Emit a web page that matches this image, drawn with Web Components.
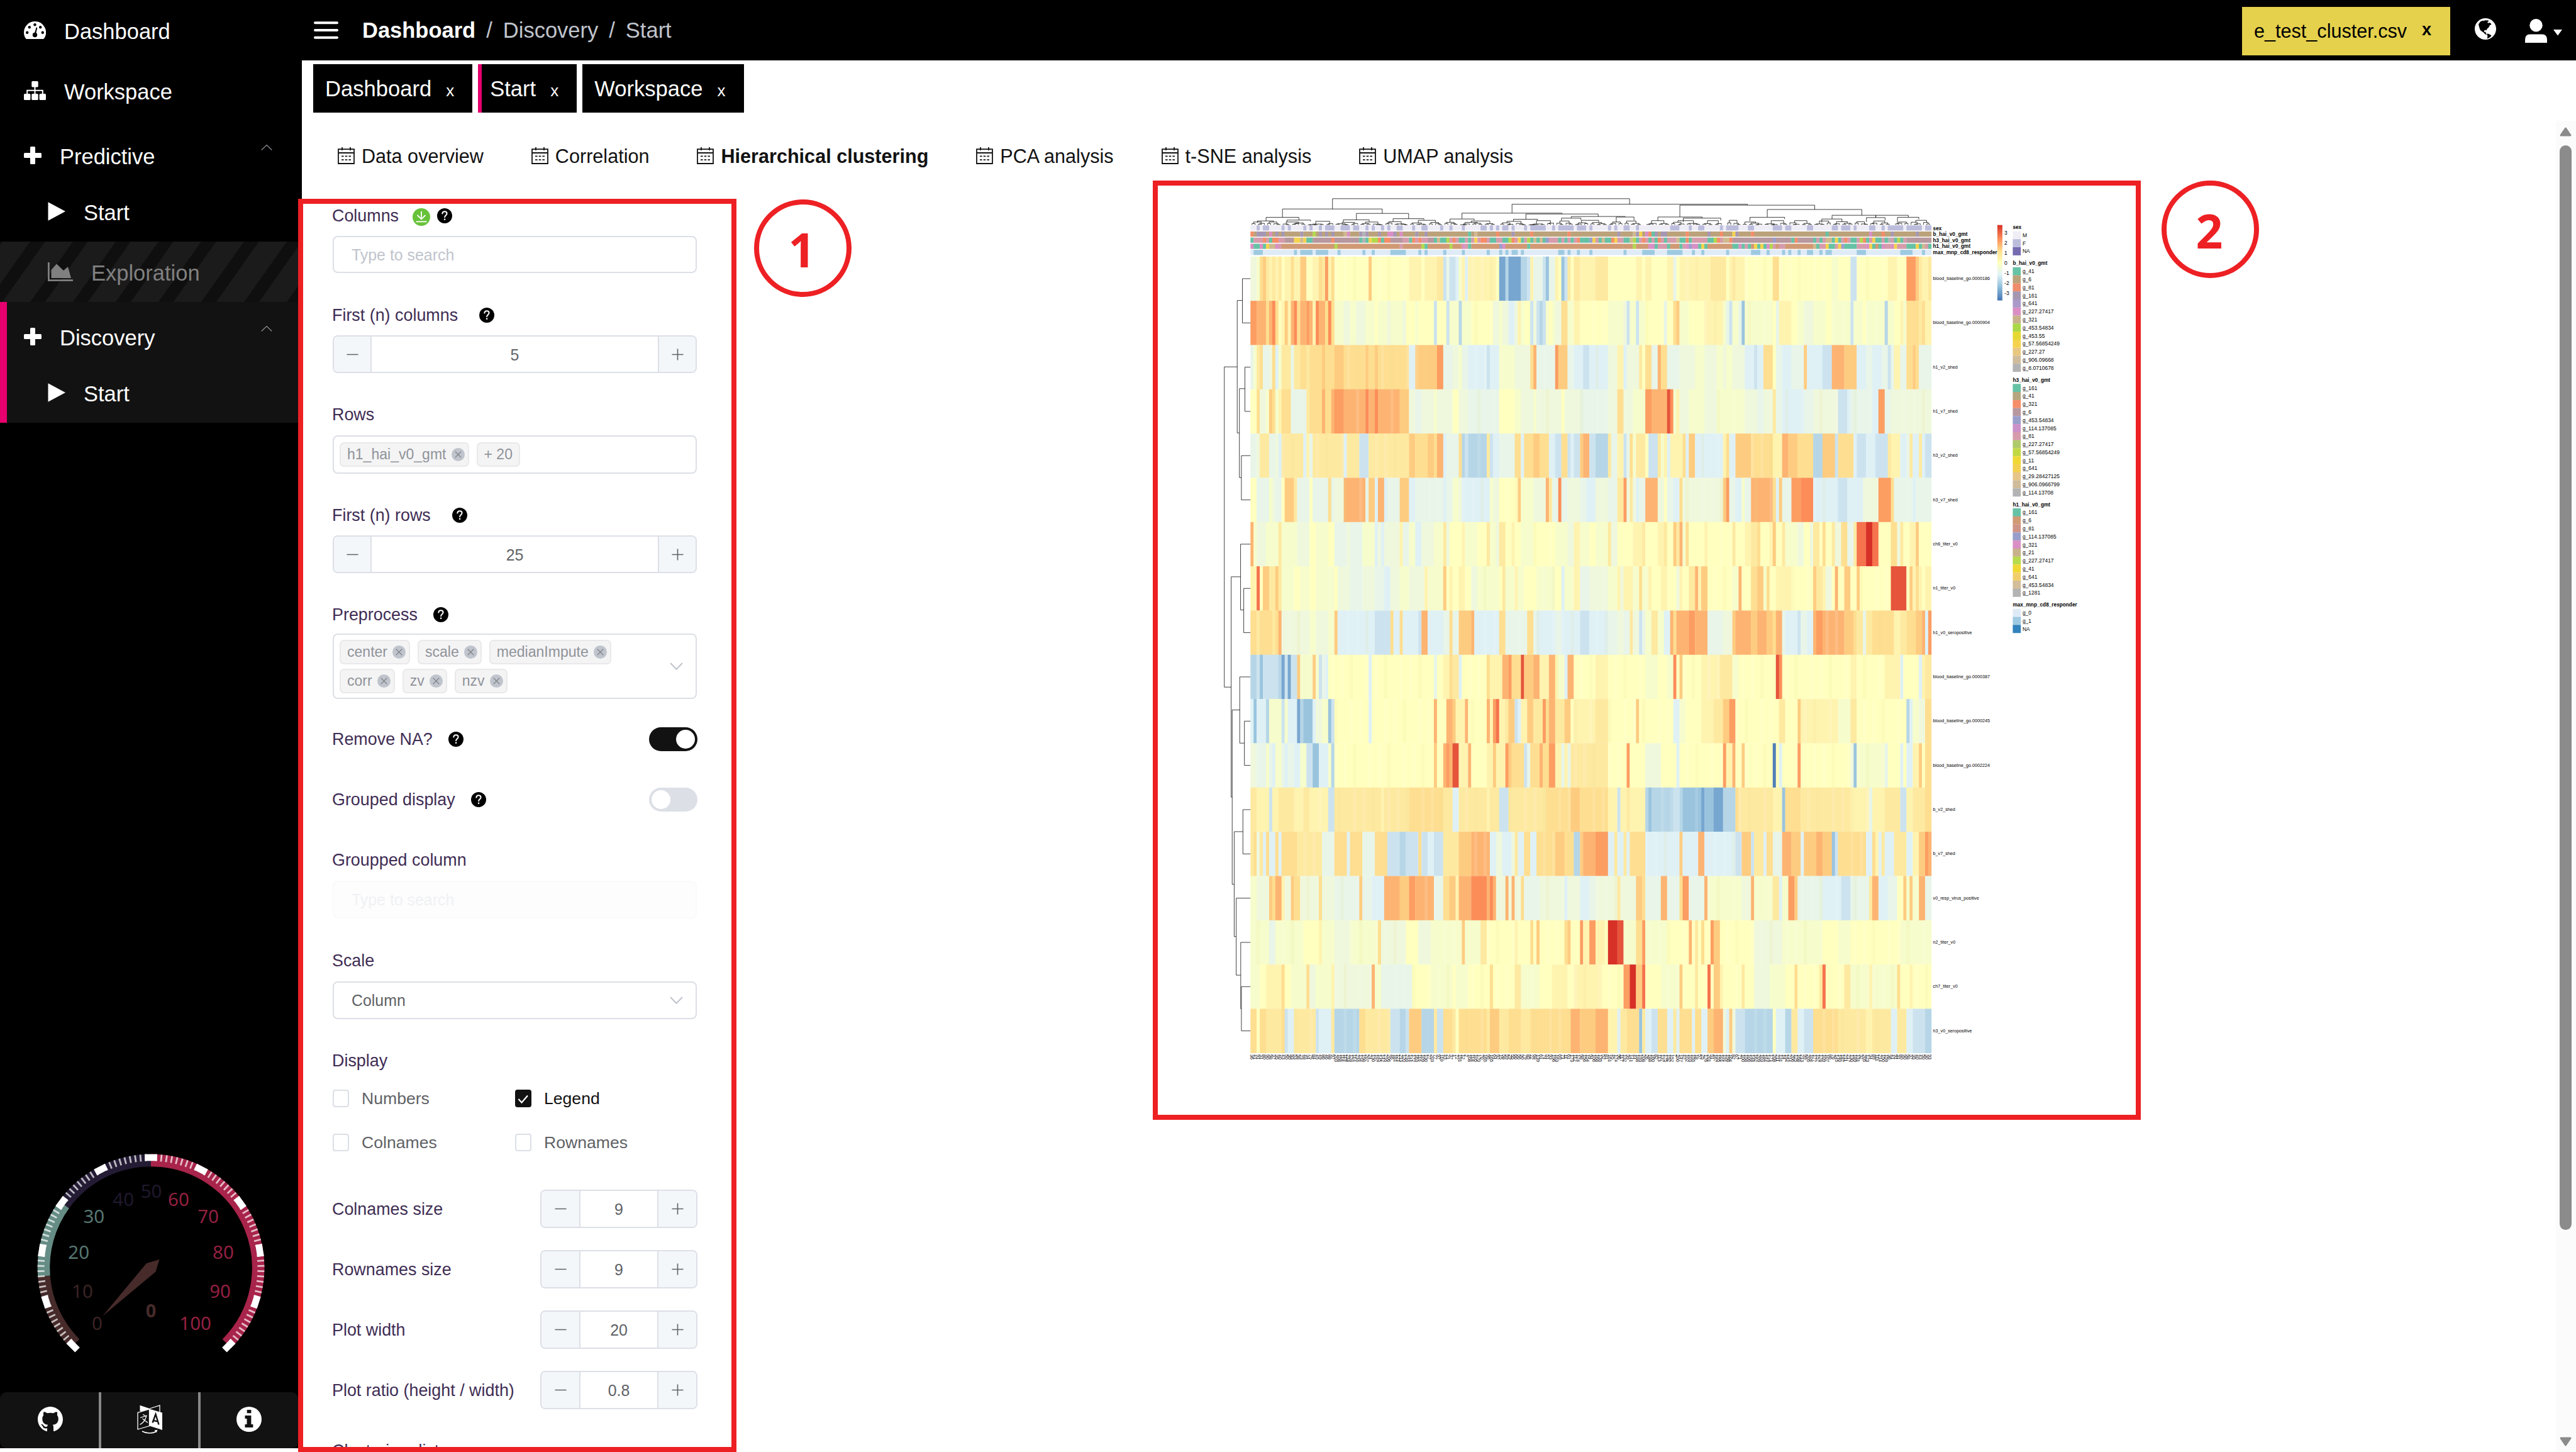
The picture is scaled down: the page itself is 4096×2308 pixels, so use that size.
<!DOCTYPE html>
<html lang="en">
<head>
<meta charset="utf-8">
<title>Hierarchical clustering</title>
<style>
html,body{margin:0;padding:0;height:100%;background:#fff;overflow:hidden}
body{font-family:"Liberation Sans",Arial,sans-serif;color:#121212}
</style>
</head>
<body>
<app-shell></app-shell>
<script>
const define = (name, css, html) => customElements.define(name, class extends HTMLElement {
  constructor() {
    super();
    this.attachShadow({ mode: 'open' });
  }
  connectedCallback() {
    if (this.ready) return;
    this.ready = true;
    const body = typeof html === 'function' ? html(this) : html;
    this.shadowRoot.innerHTML = '<style>*{box-sizing:border-box}' + css + '</style>' + body;
  }
});

/* ---------- icons ---------- */
const ICONS = {
  gauge: ['0 0 35 28', '<path fill="#fff" d="M17.500 0A17.500 17.500 0 0 0 0 17.500c0 3.600 1 6.900 2.800 9.600.4.600.9.900 1.600.900h26.200c.7 0 1.200-.3 1.600-.9A17.500 17.500 0 0 0 17.500 0z"/><g fill="#000"><circle cx="17.500" cy="5.300" r="2.200"/><circle cx="8.800" cy="9.200" r="2.200"/><circle cx="26.200" cy="9.200" r="2.200"/><circle cx="5.200" cy="17.700" r="2.200"/><circle cx="29.800" cy="17.700" r="2.200"/><circle cx="17.500" cy="21.500" r="3.700"/><path d="M16.600 20l3-10.500 1.700.5-2.300 10.600z"/></g>'],
  sitemap: ['0 0 35 30', '<g fill="#fff"><rect x="12.300" y="0" width="10.400" height="9.500" rx="1.500"/><rect x="0" y="20" width="10.400" height="10" rx="1.500"/><rect x="12.300" y="20" width="10.400" height="10" rx="1.500"/><rect x="24.600" y="20" width="10.400" height="10" rx="1.500"/></g><path d="M17.500 9v11M5.200 20v-5.200h24.600V20" stroke="#fff" stroke-width="2" fill="none"/>'],
  plus: ['0 0 28 28', '<path fill="#fff" d="M11.500 0h5q1.500 0 1.500 1.500V10h8.500q1.500 0 1.500 1.500v5q0 1.500-1.500 1.500H18v8.500q0 1.500-1.500 1.500h-5q-1.500 0-1.500-1.500V18H1.500Q0 18 0 16.500v-5Q0 10 1.500 10H10V1.500Q10 0 11.500 0z"/>'],
  play: ['0 0 28 30', '<path fill="#fff" d="M.5 0.300L28 15 .5 29.700z"/>'],
  area: ['0 0 40 30', '<path fill="#808080" d="M0 0h2.800v27.200H40V30H0zM5.500 25V12L14 2.500 25 13l7-6 5 18z"/>'],
  question: ['0 0 24 24', '<circle cx="12" cy="12" r="12" fill="#000"/><path d="M8.300 8.600c.2-2.200 1.700-3.400 3.700-3.400 2.100 0 3.600 1.300 3.600 3.200 0 2.700-3.500 2.900-3.500 5.900" stroke="#fff" stroke-width="2" fill="none" stroke-linecap="round"/><circle cx="12.100" cy="17.800" r="1.300" fill="#fff"/>'],
  download: ['0 0 28 28', '<circle cx="14" cy="14" r="14" fill="#67c23a"/><path d="M14 5v12M7.500 11l6.500 6.300 6.500-6.300M5.500 21.300h17" stroke="#fff" stroke-width="1.800" fill="none"/>'],
  calendar: ['0 0 27 27', '<path d="M1 3.200h25V26H1zM1 9h25M7 0v5M20 0v5" stroke="#121212" stroke-width="1.800" fill="none"/><g fill="#121212"><rect x="6" y="13.500" width="3.600" height="1.700"/><rect x="11.700" y="13.500" width="3.600" height="1.700"/><rect x="17.400" y="13.500" width="3.600" height="1.700"/><rect x="6" y="19.200" width="3.600" height="1.700"/><rect x="11.700" y="19.200" width="3.600" height="1.700"/><rect x="17.400" y="19.200" width="3.600" height="1.700"/></g>'],
  up: ['0 0 18 10', '<path d="M.7 9.500L9 1.500l8.300 8" stroke="#909399" stroke-width="1.200" fill="none"/>'],
  down: ['0 0 21 12', '<path d="M1 1l9.500 9.800L20 1" stroke="#c0c4cc" stroke-width="2" fill="none"/>'],
  minus: ['0 0 20 20', '<path d="M0.500 10h19" stroke="#606266" stroke-width="1.700"/>'],
  add: ['0 0 20 20', '<path d="M0.500 10h19M10 .5v19" stroke="#606266" stroke-width="1.700"/>'],
  close: ['0 0 22 22', '<circle cx="11" cy="11" r="11" fill="#c0c4cc"/><path d="M6 6l10 10M16 6L6 16" stroke="#7f8389" stroke-width="1.300"/>'],
  burger: ['0 0 39 28', '<path d="M2 2.200h35M2 14h35M2 25.800h35" stroke="#fff" stroke-width="4" stroke-linecap="round"/>'],
  globe: ['0 0 34 34', '<circle cx="17" cy="17" r="17" fill="#fff"/><path fill="#000" d="M6 9.500l3-4.300 4-1.500 2 .8 1-1.500 2 .6 3-.3 1.500 1.500-2.300 1 .8 2.200L23 7l2 .4 1.500 2.400-2.700 1.400-1.500 3.300-3 2.800-.8 2.300-2-1-1.800 1.400.6 2 2-.6.4 2.600 2 2.600-3-1-2.600-2.800L8.800 19l-1.500-4.300-.8-3z"/><path fill="#000" d="M19.500 24.200l3.500 1 3.600 2.300-2 2.600-4.600 2.500.3-4z"/>'],
  user: ['0 0 36 38', '<ellipse cx="18" cy="10.200" rx="10.500" ry="10.200" fill="#fff"/><path fill="#fff" d="M0 38v-5q0-8.500 8-8.500h20q8 0 8 8.500v5z"/>'],
  caret: ['0 0 15 10', '<path fill="#fff" d="M0 0h15L7.500 9.500z"/>'],
  github: ['0 0 16 16', '<path fill="#fff" d="M8 0C3.580 0 0 3.580 0 8c0 3.540 2.290 6.530 5.470 7.590.4.070.55-.17.55-.38 0-.19-.01-.82-.01-1.490-2.010.37-2.530-.49-2.690-.94-.09-.23-.48-.94-.82-1.130-.28-.15-.68-.52-.01-.53.63-.01 1.080.58 1.230.82.72 1.210 1.870.87 2.330.66.07-.52.28-.87.51-1.070-1.780-.2-3.640-.89-3.640-3.950 0-.87.31-1.590.82-2.150-.08-.2-.36-1.020.08-2.120 0 0 .67-.21 2.200.82.64-.18 1.320-.27 2-.27s1.360.09 2 .27c1.530-1.040 2.200-.82 2.200-.82.44 1.100.16 1.920.08 2.120.51.56.82 1.270.82 2.150 0 3.070-1.870 3.750-3.650 3.950.29.25.54.73.54 1.480 0 1.070-.01 1.930-.01 2.200 0 .21.15.46.55.38A8.010 8.010 0 0 0 16 8c0-4.420-3.580-8-8-8z"/>'],
  translate: ['0 0 40 46', '<path d="M4.500.8v9L20 13V6z" fill="#fff"/><path d="M20 6l16-5v14" stroke="#fff" stroke-width="1.300" fill="none"/><path d="M1 12.300l18.500-5.500v26.700L1 39z" stroke="#fff" stroke-width="1.300" fill="#121212"/><path d="M19.500 6.500L40 12.500V40l-20.500-6.500z" fill="#fff"/><path d="M24.500 28.500l5-13.500 5 16.500M26 25l7.500 1.700" stroke="#121212" stroke-width="2.400" fill="none"/><path d="M9 15.500l3.500 1.300M5 20.500l10-3.200c-2 7-6 12-10.500 14M8.500 22l8.500 6.500" stroke="#fff" stroke-width="1.300" fill="none"/><path d="M8 42c7 4 16 4 22.500.5" stroke="#fff" stroke-width="1.500" fill="none"/><path d="M27.500 40.500l5-.8-1.800 4.600z" fill="#fff"/>'],
  info: ['0 0 40 40', '<circle cx="20" cy="20" r="20" fill="#fff"/><path fill="#121212" d="M16.700 5h6.700v5.200h-6.700zM13.500 14h9.900v14h3v5H13.500v-5h3V19h-3z"/>'],
  check: ['0 0 26 28', '<path d="M5.500 15l5 5.500L20 9.500" stroke="#fff" stroke-width="2.200" fill="none"/>'],
  tri: ['0 0 19 15', '<path fill="#8b8b8b" stroke="#8b8b8b" stroke-width="3" stroke-linejoin="round" d="M9.500 2L17 13H2z"/>']
};
define('ui-icon', ':host{display:block;flex:none}svg{display:block;width:100%;height:100%}', el => {
  const i = ICONS[el.getAttribute('name')];
  const w = el.getAttribute('w'), h = el.getAttribute('h') || w;
  el.style.width = w + 'px'; el.style.height = h + 'px';
  return `<svg viewBox="${i[0]}" preserveAspectRatio="none">${i[1]}</svg>`;
});

/* ---------- sidebar ---------- */
define('nav-item', `
:host{display:flex;align-items:center;height:96px;padding-left:38px;font-size:34.500px;color:#fff;line-height:40px}
:host([title-row]){padding-top:14px}
:host([child]){padding-left:76px}
:host([disabled]){color:#808080;background:repeating-linear-gradient(125.300deg,#0f0f0f 0,#0f0f0f 3.100px,#1b1b1b 3.100px,#1b1b1b 39.100px,#0f0f0f 39.100px,#0f0f0f 55.500px)}
.t{margin-left:29px;padding-top:4px}
:host([disabled]) .t{margin-left:29px}
.c{margin:-26px 41px 0 auto}`,
el => `<ui-icon name="${el.getAttribute('icon')}" w="${el.getAttribute('iw')}" h="${el.getAttribute('ih')}"></ui-icon><span class="t"><slot></slot></span>` +
  (el.hasAttribute('title-row') ? '<ui-icon class="c" name="up" w="18" h="10"></ui-icon>' : ''));

define('resource-gauge', ':host{display:block}svg{display:block}text{font-family:"Noto Sans","Open Sans",sans-serif;text-anchor:middle}', () => {
  const cx = 240, cy = 190, R = 180.400;
  const pt = (v, r) => { const a = (225 - v * 2.700) * Math.PI / 180; return [cx + r * Math.cos(a), cy - r * Math.sin(a)]; };
  const arc = (a, b, c) => { const r = R - 9.800, p = pt(a, r), q = pt(b, r); return `<path d="M${p}A${r} ${r} 0 ${(b - a) * 2.700 > 180 ? 1 : 0} 1 ${q}" fill="none" stroke="${c}" stroke-width="19.600"/>`; };
  let s = arc(0, 15, '#462b2a') + arc(15, 30, '#668d85') + arc(30, 50, '#241b35') + arc(50, 100, '#a8244a');
  for (let v = 1; v < 100; v++) if (v % 10) { const p = pt(v, R), q = pt(v, R - 11); s += `<path d="M${p}L${q}" stroke="#fff" stroke-opacity=".7" stroke-width="2.800"/>`; }
  for (let v = 0; v <= 100; v += 10) { const p = pt(v, R), q = pt(v, R - 10.700); s += `<path d="M${p}L${q}" stroke="#fff" stroke-width="19.500"/>`; }
  const L = [[0,505,922,'#3a2424'],[10,428,758,'#3a2424'],[20,409,565,'#567670'],[30,488,382,'#567670'],[40,641,297,'#1f182d'],[50,786,256,'#1f182d'],[60,928,297,'#932040'],[70,1082,382,'#932040'],[80,1160,565,'#932040'],[90,1144,759,'#932040'],[100,1015,922,'#932040']];
  for (const [t, x, y, c] of L) s += `<text x="${x * .306}" y="${y * .3161 - 2.100}" font-size="29.500" fill="${c}">${t}</text>`;
  s += `<text x="240" y="268.500" font-size="29" font-weight="700" fill="#462b2a">0</text><path fill="#462b2a" d="M163 267L233 183 253.500 177 247.500 196.500z"/>`;
  return `<svg width="474" height="340" viewBox="0 0 474 340">${s}</svg>`;
});

define('side-bar', `
:host{display:flex;flex-direction:column;width:480px;height:2302px;background:#000}
.open{background:#121212;border-left:11px solid #e6006e;height:192px;width:474px}
.open nav-item:first-child{padding-left:27px}.open nav-item:last-child{padding-left:65px}
.dis,.in{width:474px}
resource-gauge{margin-top:auto}
footer{display:flex;width:474px;height:89px;margin-top:48px;background:#121212;border-radius:10px;overflow:hidden}
footer div{width:157px;display:flex;align-items:center;justify-content:center;padding-left:3px;padding-bottom:3px}
footer div+div{border-left:4px solid #888;width:158px;padding-left:0}`, `
<nav-item icon="gauge" iw="35" ih="28">Dashboard</nav-item>
<nav-item icon="sitemap" iw="35" ih="30">Workspace</nav-item>
<nav-item class="in" title-row icon="plus" iw="28" ih="28">Predictive</nav-item>
<nav-item child icon="play" iw="28" ih="30">Start</nav-item>
<nav-item class="dis" disabled child icon="area" iw="40" ih="30">Exploration</nav-item>
<div class="open"><nav-item title-row icon="plus" iw="28" ih="28">Discovery</nav-item><nav-item child icon="play" iw="28" ih="30">Start</nav-item></div>
<resource-gauge></resource-gauge>
<footer><div><ui-icon name="github" w="40"></ui-icon></div><div><ui-icon name="translate" w="40" h="46"></ui-icon></div><div><ui-icon name="info" w="40"></ui-icon></div></footer>`);

/* ---------- header and tabs ---------- */
define('top-bar', `
:host{display:flex;align-items:center;height:96px;background:#000;padding:0 22px 0 19px;font-size:34.500px;color:#c0c4cc}
.b{display:flex;margin-left:38px;gap:17px;line-height:40px;padding-bottom:1px}
b{color:#fff}
.tag{margin-left:auto;display:flex;align-items:center;height:77px;width:331px;padding:0 20px 0 19px;justify-content:space-between;background:#e5d14c;color:#000;font-size:30.600px;margin-bottom:-2px}
.tag b{color:#000;font-size:27px;padding-right:10px;margin-top:-3px}
.g{margin:-4px 0 0 39px}.u{margin:2px 0 0 46px}.c{margin:8px 0 0 10px}`, `
<ui-icon name="burger" w="39" h="28"></ui-icon>
<div class="b"><b>Dashboard</b><span>/</span><span>Discovery</span><span>/</span><span>Start</span></div>
<div class="tag"><span>e_test_cluster.csv</span><b>x</b></div>
<ui-icon class="g" name="globe" w="34"></ui-icon><ui-icon class="u" name="user" w="35" h="38"></ui-icon><ui-icon class="c" name="caret" w="14" h="10"></ui-icon>`);

define('page-tab', `
:host{display:flex;align-items:baseline;height:77px;line-height:79px;background:#000;color:#fff;font-size:34.600px;padding:0 29px 0 19px;gap:23px}
:host([active]){border-left:6px solid #e6006e;padding-left:13px}
i{font-style:normal;font-size:26px}`, '<slot></slot><i>x</i>');

define('view-tab', `
:host{display:flex;align-items:center;gap:11px;font-size:30.600px;line-height:36px;color:#121212}
:host([active]){font-weight:700}ui-icon{margin-top:-2px}`, '<ui-icon name="calendar" w="27"></ui-icon><slot></slot>');

/* ---------- form controls ---------- */
define('form-item', `
:host{display:block}
:host([inline]){display:flex;justify-content:space-between;align-items:flex-start}
.l{display:flex;align-items:center;height:48px;font-size:26.880px;line-height:48px;color:#402d54;white-space:nowrap}
.l ui-icon{margin-left:var(--q,34px)}.l .d{margin:4px 0 0 22px}.l .d+ui-icon{margin-left:11px}
.f{margin-top:var(--mt,9px)}`,
el => `<div class="l"><span>${el.getAttribute('label')}</span>${el.hasAttribute('dl') ? '<ui-icon class="d" name="download" w="28"></ui-icon>' : ''}${el.hasAttribute('help') ? '<ui-icon name="question" w="24"></ui-icon>' : ''}</div><div class="f"><slot></slot></div>`);

define('text-field', `
:host{display:flex;align-items:center;justify-content:space-between;width:579px;margin-left:1px;height:60px;border:2px solid #dcdfe6;border-radius:8px;padding:0 20px 0 28px;font-size:24.900px;color:#606266;background:#fff}
:host([placeholder]){color:#c0c4cc}
:host([off]){background:#fdfdfd;border-color:#f9fafb;color:#f0f1f4}
span{padding-top:1px}`,
el => `<span>${el.getAttribute('placeholder') || el.getAttribute('value')}</span>${el.hasAttribute('select') ? '<ui-icon name="down" w="21" h="12"></ui-icon>' : ''}`);

define('number-field', `
:host{display:flex;width:579px;height:60px;margin-left:1px;border:2px solid #dcdfe6;border-radius:8px;overflow:hidden;font-size:24.900px;color:#606266}
:host([small]){width:250px;height:61px}
div{width:60px;display:flex;align-items:center;justify-content:center;background:#f4f7fa;border-right:2px solid #dcdfe6}
div:last-child{border:0;border-left:2px solid #dcdfe6}
:host([small]) div{width:62px}
span{flex:1;display:flex;align-items:center;justify-content:center;padding-top:2px}`,
'<div><ui-icon name="minus" w="19"></ui-icon></div><span><slot></slot></span><div><ui-icon name="add" w="19"></ui-icon></div>');

define('tag-field', `
:host{display:flex;align-items:center;justify-content:space-between;width:579px;margin-left:1px;height:61px;border:2px solid #dcdfe6;border-radius:8px;padding:0 20px 0 9px}
.w{display:flex;flex-wrap:wrap;gap:7px 12px;width:460px}`,
el => `<div class="w"><slot></slot></div>${el.hasAttribute('select') ? '<ui-icon name="down" w="21" h="12"></ui-icon>' : ''}`);
define('chip-tag', `
:host{display:flex;align-items:center;gap:8px;height:39px;padding:0 5px 0 10px;border:2px solid #e9e9eb;border-radius:7px;background:#f4f4f5;font-size:23.040px;color:#909399}
:host([plain]){padding-right:10px}`,
el => `<slot></slot>${el.hasAttribute('plain') ? '' : '<ui-icon name="close" w="21"></ui-icon>'}`);

define('toggle-switch', `
:host{display:flex;width:77px;height:38px;border-radius:19px;background:#dcdfe6;padding:4px;margin-top:5px}
:host([on]){background:#121212;justify-content:flex-end}
i{width:30px;height:30px;border-radius:50%;background:#fff}`, '<i></i>');

define('check-option', `
:host{display:flex;align-items:center;gap:20px;width:290px;height:28px;font-size:26.600px;color:#606266;line-height:28px}
:host([on]){color:#121212}
i{width:26px;height:28px;border:2px solid #dcdfe6;border-radius:4px;display:block}
:host([on]) i{background:#121212;border:0}`,
el => `<i>${el.hasAttribute('on') ? '<ui-icon name="check" w="26" h="28"></ui-icon>' : ''}</i><slot></slot>`);

define('settings-form', `
:host{display:grid;width:691px;padding:20px 0 0 48px;grid-template-rows:158px 158px 160px 158px 198px 96px 96px 160px 159px 231px 96px 96px 96px 96px 60px;height:2009px;overflow:hidden;align-items:start}
form-item{width:581px}
.g{display:flex;flex-wrap:wrap;row-gap:42px;margin:22px 0 0 1px}
.p{--q:25px;--mt:6px}.n{--mt:0px;margin-top:5px}.n number-field{margin-top:-7px}`, `
<form-item label="Columns" dl help style="--mt:8px"><text-field style="height:59px" placeholder="Type to search"></text-field></form-item>
<form-item label="First (n) columns" help style="--mt:8px"><number-field>5</number-field></form-item>
<form-item label="Rows"><tag-field><chip-tag>h1_hai_v0_gmt</chip-tag><chip-tag plain>+ 20</chip-tag></tag-field></form-item>
<form-item label="First (n) rows" help style="--mt:8px"><number-field>25</number-field></form-item>
<form-item class="p" label="Preprocess" help><tag-field select style="height:104px"><chip-tag>center</chip-tag><chip-tag>scale</chip-tag><chip-tag>medianImpute</chip-tag><chip-tag>corr</chip-tag><chip-tag>zv</chip-tag><chip-tag>nzv</chip-tag></tag-field></form-item>
<form-item class="p" style="--mt:0px" inline label="Remove NA?" help><toggle-switch on></toggle-switch></form-item>
<form-item class="p" style="--mt:0px" inline label="Grouped display" help><toggle-switch></toggle-switch></form-item>
<form-item label="Groupped column"><text-field off placeholder="Type to search"></text-field></form-item>
<form-item label="Scale"><text-field select value="Column"></text-field></form-item>
<form-item label="Display" style="--mt:0px"><div class="g"><check-option>Numbers</check-option><check-option on>Legend</check-option><check-option>Colnames</check-option><check-option>Rownames</check-option></div></form-item>
<form-item class="n" inline label="Colnames size"><number-field small>9</number-field></form-item>
<form-item class="n" inline label="Rownames size"><number-field small>9</number-field></form-item>
<form-item class="n" inline label="Plot width"><number-field small>20</number-field></form-item>
<form-item class="n" inline label="Plot ratio (height / width)"><number-field small>0.8</number-field></form-item>
<form-item class="n" label="Clustering distance"></form-item>`);

/* ---------- heatmap ---------- */
const LEVELS = { A:'#4f7fb9',B:'#77a6d0',C:'#9ac4de',D:'#b6d6e7',E:'#cce3ef',F:'#dff1f5',G:'#e8f5e8',H:'#eff8dc',I:'#f6fccb',J:'#ffffbf',K:'#fff3b0',L:'#fee9a0',M:'#fede90',N:'#fecc80',O:'#fdb472',P:'#fc9d62',Q:'#fc8d59',R:'#f5734d',S:'#e5543b',T:'#d73027' };
/* Each row is a list of runs, offset followed by level; a "|" switches to the second scale. */
const ROWS = [
'157H 180I 190M 201N 212L 225K 236L 248K 258L 270J 280K 303M 315K 337N 358J 380K 403M 414L 426P 437K 448M 460J 583N 593J 728K 770J 784K 828L 850E 862G 873E 895F 907I 918K 930F 941K 1042J 1052B 1075D 1086B 1130D 1153E 1164K 1175G 1209E 1220C 1231G 1253K 1265J 1276C 1287E 1298L 1310J 1321L 1343K 1399L 1443J|-8J 32K 52J 65K 83J 133K 153G 163J 174K 275L 322J 334K 343L 354K 380J 475M 493J 665I 685J 726E 745J 845K 875J 905P 935N 945L 955K 975L',
'157P 180O 212M 225O 236Q 246M 258J 270K 280N 292K 303O 314Q 325M 337O 358P 370O 381K 392Q 404O 426M 437Q 448M 460I 494H 515I 540H 570I 605J 616I 650H 660I 705H 715J 750I 765J 818E 828J 862E 873I 907D 918I 951J 1030H 1053I 1065H 1087F 1108H 1120K 1130I 1141J 1164E 1175H 1187E 1198D 1209E 1220I 1231J 1243I 1254H 1276M 1298I 1321K 1343J 1443I|-8H 3E 13I 33E 43I 65J 123G 133J 153M 164N 174I 204J 254K 314I 324G 334E 344I 364G 374C 384I 474J 484G 494K 534J 556I 575H 605I 640J 665I 725E 735I 765J 775I 835D 845I 865J 885K 895I 905M 945L 955M 965K',
'157G 168I 180L 191M 201G 225H 236M 247F 258I 270L 303G 315L 335M 358L 370M 415N 425M 460N 493M 571N 583M 605N 616M 728F 750N 829P 850G 885H 907I 918G 941F 1007E 1018F 1053I 1108H 1164M 1175O 1187G 1253P 1265N 1298G 1320F 1355E 1377F 1443H 1478K|-8F 3H 43L 53J 63M 83G 103O 113M 133G 175H 225I 250H 295I 310H 323I 344H 384F 414E 424F 444M 474J 484G 500F 535G 575N 585F 635E 665O 705N 745F 775G 795F 825G 845E 855G 865K 885G 905M 925N 935M 945G',
'157J 180M 190H 212I 225N 235M 246I 257K 270M 302G 358L 370M 414O 425M 448O 460P 493O 571Q 583O 605Q 616O 694N 728H 750G 772H 818I 828H 885J 907H 940G 1053J 1108I 1131H 1175I 1186H 1276J 1287H 1343G 1443H 1478M|-8H 23I 63P 83O 133S 143Q 153I 163K 173H 204I 254H 294I 380H 424G 444H 474L 484G 500F 575G 605H 685E 715F 725G 795F 815P 835G 855H',
'157G 180H 191L 225G 247H 258F 270L 347F 358K 370G 381L 493F 504L 549E 583L 728N 750M 795N 818M 829O 850F 862G 907M 918D 930E 941D 1007L 1018E 1030F 1053G 1108M 1131F 1142M 1175N 1198M 1231F 1253E 1276M 1298E 1309F 1321E 1343N 1355O 1377E 1400D 1443L 1455G 1478K|-8E 3G 13M 23I 33L 63J 73E 103L 113I 123K 133F 143K 183M 193F 203N 223F 314K 323M 334F 354N 404M 475K 504O 524N 554M 604D 635N 675E 685M 735F 745E 775F 805E 845L 855K 885F 905G 915L 925F 945L 955F 965E',
'157J 180G 225I 235H 246G 270J 280N 315L 325G 370J 380G 437M 448G 460H 493O 571G 583N 605F 615O 638F 650G 694N 728F 750G 850F 862G 885I 907H 918F 1018I 1030H 1053J 1119N 1130I 1175H 1220O 1231L 1242G 1265Q 1276G 1298H 1343G 1366F 1399H 1443G 1478L|-8P 3H 13L 23H 33F 43G 63O 103H 123J 133G 153F 173M 183H 315N 323P 334G 354F 375I 384G 404O 475M 484F 494N 504G 534P 565Q 604F 685E 715F 765H 815P 855M 865G 925F 935G',
'157O 168I 180H 212I 258L 269I 325H 370J 392I 437J 460G 504H 515G 560I 605F 615H 627F 638H 694K 705G 728I 750F 772H 818I 851L 862H 873J 918K 930I 975J 1007L 1018I 1042H 1053L 1075J 1097K 1108J 1131I 1175J 1254I 1298H 1321K 1343I 1377J 1400I 1443L 1455H 1478J|-8J 23K 54L 63J 103K 123L 133J 153N 164L 174O 183I 193M 204J 254K 264J 344L 354J 384K 404L 424M 434J 465K 475N 484J 504L 514I 554H 575J 594H 605L 625J 635M 645J 665L 675H 695M 715G 735L 745R 775T 795R 815J 855M 875H 885L 895J 915K 935N 945J',
'157K 180R 191J 201N 225L 247N 258L 270I 315J 337I 370J 392I 460J 470H 515G 560H 605G 638F 660H 694I 728H 784K 794I 851N 862J 873K 885J 905K 930J 953H 975I 1053J 1063L 1075I 1108K 1120I 1142J 1187I 1254J 1276F 1287I 1321K 1343G 1377H 1443I 1478K 1489H|-8K 23I 43M 53I 75K 83J 113K 133J 164H 174K 183J 204L 224O 234K 244N 264J 344I 364O 374J 404M 424N 444I 454M 465J 484K 534J 605N 615L 635K 645H 665J 675O 685J 705N 725J 745N 755J 855S 905J 915N 925K 935M 945K 955J 965K',
'157M 180L 191M 235L 247M 258O 269H 370I 392H 437I 460N 470F 605E 660M 672F 694M 705F 760E 772O 795F 850G 873M 885G 907N 953O 963F 1053M 1075G 1153M 1175G 1187F 1254G 1276F 1343E 1377F 1443G 1478H|-8G 13L 23H 43E 53G 63I 83L 103I 123F 143O 153M 163O 203P 223O 264G 315H 344N 354O 404N 424O 454N 475M 484O 504G 514F 554E 564G 585F 605O 615P 635O 705N 735M 745L 765G 775L 795M 865K 885L 905M 935N 955O 965F 975P',
'85D 97E 103C 109E 140D 146B 152E 158B 164E 176N 182I 206N 212I 218E 224G 230F 237J 316F 322J 443G 449J 461K 473M 479L 491F 497J 545M 551K 575O 588P 594M 612S 618N 636O 648K 667O 679K 685I 697F 703O 715J 757K 781J 855I 879J 897I 909Q 915J 921N 927J 963K 1000L 1024I 1036J 1109S 1115Q 1121J 1254K 1266J 1321K 1350F 1357J 1388F 1394K 1400L',
'85F 91C 97F 115D 121I 146E 152I 158F 176B 182D 188C 206F 212H 225I 237C 243E 249J 316F 322J 443O 449J 467O 479N 485K 503O 509J 546O 552K 558P 564R 570K 582L 588N 600E 606F 612K 624N 636L 655P 661M 667O 679L 697N 709J 715K 757L 781J 837N 843J 909F 921I 933J 963K 988L 1006N 1018P 1030J 1115L 1130J 1152N 1158K 1230I 1254L 1266J 1363D 1370F 1376I 1388H 1400M',
'85H 97G 115I 121G 127F 134I 146G 152F 158G 170F 182I 194E 206C 218F 237I 243D 249J 443N 449J 461O 467P 473O 479S 491K 509O 515J 545K 558N 564K 582P 588N 594M 618E 624G 630M 648O 655M 667P 679K 691G 697K 703G 709L 781J 819P 825J 855H 885J 915F 921J 1006P 1012K 1024O 1030J 1042N 1048J 1103A 1109J 1115F 1121J 1152P 1158J 1254H 1260C 1266I 1321G 1327J 1350F 1357J 1363F 1376K 1388N 1394J 1400M',
'85L 97K 121E 127K 140L 170K 188L 200K 237E 249L 340K 346L 395M 461L 479F 491L 545K 551L 570E 588L 660M 709N 727M 781K 800E 806K 819L 825K 855D 861C 867D 909E 921D 927C 963B 970C 988B 1006D 1030M 1036L 1103K 1121C 1127M 1158L 1254K 1291G 1297K 1321L 1352E 1364K 1376L 1400M',
'85L 91M 97H 103L 109F 115M 121F 134M 140F 146M 176L 225G 249M 273F 279M 303G 327M 352E 376D 388E 413M 418E 430F 443E 461L 491N 515O 552F 564H 576F 594H 600L 606F 618M 630F 642M 679N 697M 715D 727N 733O 757P 781F 794L 800F 813L 819F 825M 855F 921N 927F 958O 970F 1030E 1042N 1060E 1066L 1084F 1091M 1103G 1121O 1139N 1158F 1164N 1188O 1200N 1218C 1224E 1230M 1285F 1297M 1303K 1309F 1315L 1321F 1339L 1364F 1376K 1388N 1400P 1406O',
'85I 97H 121N 127M 134O 146K 152H 164N 170M 182H 218M 224H 249G 297N 303G 322F 346O 376N 395P 407O 443G 461M 473N 485K 491O 515Q 545O 552Q 558O 564H 582O 588H 594O 600H 612M 618G 648H 697F 703H 727F 745G 757H 800L 806H 837N 849M 855G 885O 897G 921M 927P 939G 970O 976I 1042H 1060O 1066I 1103L 1115F 1121I 1133P 1145N 1151G 1200F 1237E 1254G 1291L 1297O 1309F 1327G 1345J 1357N 1364I 1370N 1376I 1388O 1400G',
'85I 121G 134I 188J 218K 224I 249H 279I 334M 340H 388J 413H 437I 497N 503I 533L 545J 600K 606J 630M 636J 642N 648J 697M 703N 709J 727P 733K 745P 757K 775J 781T 800S 812I 837M 849P 855I 900J 939O 945J 951L 957J 963M 970J 982P 988N 1000J 1066H 1121I 1200J 1230I 1254J 1350I',
'85I 103J 115K 146M 152J 164I 194M 200H 212I 243K 249H 322O 328I 340G 400J 437I 479J 485I 509J 552M 558J 600L 612I 648J 673K 703J 715K 770J 812P 825T 837N 849R 855J 885I 921N 927J 951L 957J 976R 982J 988N 1000K 1006J 1042L 1048J 1066H 1097I 1127J 1146M 1152J 1194L 1200R 1206J 1242L 1254I 1290K 1297I 1345M 1351J 1370K 1376J',
'85M 97J 103M 115L 146M 152E 158F 170L 212E 218F 243L 249D 297M 309L 358E 376D 388E 395N 418D 430D 443L 449E 461M 479L 485J 491M 545L 552N 570L 588M 610L 630M 709O 727N 757O 781K 800F 806L 819M 843C 849L 855F 867E 879M 897F 909L 915F 921M 945F 951M 963F 975N 988O 1006H 1012F 1018N 1024H 1030E 1048D 1103J 1109F 1127D 1139L 1151F 1164E 1182M 1230L 1285K 1297L 1333F 1345L 1363F 1376E 1400D'];
const HUES = { g:'#66c2a5',o:'#f58d68',l:'#a597b4',p:'#d98fc4',k:'#d69cac',y:'#b3d84c',w:'#f4d24d',s:'#b3b3b3',c:'#9a9ecb',t:'#d0b98f',v:'#efedf6',d:'#bcbddc',e:'#dfebf7',m:'#9ecae1' };
const BARS = [
['#efedf5','157v 180d 190v 203d 224v 270d 280v 292d 303v 347d 358v 370d 381v 403d 415v 426d 460v 482d 515v 527d 549v 571d 583v 594d 605v 627d 638v 650d 660v 683d 705v 739d 750v 772d 795v 840d 850v 873d 884v 918d 930v 985d 1007v 1018d 1030v 1042d 1053v 1065d 1086v 1097d 1108v 1142d 1153v 1164d 1220v 1242d 1253v 1265d 1321v 1332d 1366v 1377d 1388v 1444d 1455v 1466d 1478v|-8d 13v 33d 43v 143d 173v 203d 213v 233d 253v 303d 313v 323d 363v 395d 413v 475d 504v 514d 534v 585d 604v 665d 685v 695d 725v 735d 745v 785d 805v 825d 835v 845d 895v 905d 955v 965d'],
['#bba27b','157o 168b 180l 213b 224p 235b 246l 258b 270l 280b 337l 347b 381y 392b 403l 414b 426l 437b 448l 459b 494t 504p 515b 549l 560s 571l 583b 616l 627b 650p 672l 683b 694p 705b 750l 761b 784l 795b 941g 952b 963t 974b 1042o 1053b 1097l 1108b 1164o 1175b 1298o 1309b 1478l 1489b|23t 33l 43w 53b 63p 73o 83g 93l 103b 113l 133b 193o 203b 264l 274b 304o 313b 343w 354l 364b 403o 413b 645g 655b 785p 795b 826o 836b 855l 865b 935l 945b'],
['#b7989f','157g 168k 202o 213k 224g 236o 258k 280b 314w 337t 347w 358g 381b 448o 459b 549g 560s 571g 583w 594y 616o 627g 638o 661b 706k 728g 739o 750k 761o 772k 795b 817g 828t 840g 862y 873k 884o 896k 907g 930k 941g 951k 963w 974k 985o 1007k 1018g 1042k 1064g 1086y 1097o 1108k 1119w 1131g 1142k 1153y 1164g 1175t 1187g 1198t 1209g 1220c 1231k 1265g 1276k 1287g 1298k 1310g 1321k 1332o 1343g 1377c 1388w 1400k 1410g 1422t 1433g 1455o 1466w 1478k|-8g 13t 23y 33g 43k 53o 63k 73g 83k 93g 103o 113k 123g 133k 163t 173g 193o 203g 213k 264g 284y 294o 304k 313t 334o 344b 475c 485b 534g 544o 554b 605g 615k 625g 635k 645t 665g 675w 685g 695k 705o 715k 725g 745k 755y 765o 775g 785k 795w 805g 825k 835g 845s 855k 865g 875y 885g 895k 905b'],
['#d09a74','157p 168g 191p 203g 213w 224t 246p 258k 270b 460y 471b 694k 705b 772y 784g 795b 873y 884b 918p 930k 941g 952b 1053c 1064p 1075b 1153g 1164b|-8b 23y 33b 73p 93g 103k 133g 143b 173g 183k 193p 203c 213p 233g 243w 254g 264b 344g 364p 374g 384k 394g 404b 414w 424g 434w 444g 454p 464y 475k 485b 494k 514b 605t 615g 625k 645w 655g 675k 685w 695c 705g 745k 775p 785w 795g 805b 815g 825p 835k 855p 865w 875k 905g 935w 945g 955t 965k 975g'],
['#dfebf7','157e 168m 201e 314m 325e 337m 381e 392m 437e 470m 481e 560m 571e 593m 605e 661m 716e 761m 772e 784m 795e 851m 862e 918m 930e 1007m 1018e 1053m 1064e 1075m 1086e 1097m 1119e 1131m 1142e 1265m 1287e 1298m 1309e 1332m 1343e 1377m 1388e|-8m 3e 53m 93e 133m 183e 213m 223e 244m 254e 324m 334e 404m 434e 454m 464e 505m 515e 525m 535e 555m 565e 585m 605e 625m 635e 645m 665e 745m 775e 886m 925e 955m 965e']];
const NAMES = ['blood_baseline_go.0000186','blood_baseline_go.0000904','h1_v2_shed','h1_v7_shed','h3_v2_shed','h3_v7_shed','ch6_titer_v0','n1_titer_v0','h1_v0_seropositive','blood_baseline_go.0000387','blood_baseline_go.0000245','blood_baseline_go.0002224','b_v2_shed','b_v7_shed','v0_resp_virus_positive','n2_titer_v0','ch7_titer_v0','h3_v0_seropositive'];
const IDS = '36 41 91 31 80 90 98 37 35 40 43 50 30 93 53 38 23 48 34 75 84 45 49 86 46 88 97 203 108 118 119 218 128 114 216 134 198 207 24 130 197 145 142 216 206 46 181 121 213 120 216 144 172 163 116 109 130 27 203 77 97 110 43 21 37 1 72 191 12 2 108 118 105 170 70 165 95 165 64 92 15 58 59 29 55 66 56 90 79 85 22 68 139 61 74 51 93 196 163 69 71 11 61 173 112 124 98 156 154 94 106 168 135 52 81 161 45 174 96 117 132 39 141 44 188 193 208 26 188 160 82 113 137 175 192 152 7 200 147 42 102 103 155 18 57 25 176 201 51 167 155 101 191 198 104 82 67 71 100 158 106 148 162 209 103 184 149 171 208 211 131 14 194 214 206 125 168 213 99 205 104 177 157 178 109 107 86 76 145 140 187 211 217 130 189 131 32 205 123 34 89 111 214 150 159'.split(' ');

define('cluster-heatmap', ':host{display:block}svg{display:block}text{font-family:"Liberation Sans",Arial,sans-serif;fill:#000}', () => {
  const X0 = 3730, CW = 9.274, N = 219, Y0 = 764, RH = 131.950;
  const runs = (src, wide) => {
    const out = [];
    src.split('|').forEach((part, k) => part.trim().split(/\s+/).forEach(t => {
      const v = parseFloat(t), c = t.slice(-1);
      const col = wide ? (v - 85) / 6.060 : k ? 120.800 + v * .0997 : (v - 157) / 11.190;
      out.push([Math.round(col), c]);
    }));
    return out.map((r, i) => [r[0], out[i + 1] ? out[i + 1][0] : N, r[1]]);
  };
  let s = '';
  ROWS.forEach((src, r) => {
    for (const [a, b, c] of runs(src, r > 8)) if (b > a) {
      s += `<rect x="${(X0 + a * CW).toFixed(1)}" y="${(Y0 + r * RH).toFixed(1)}" width="${((b - a) * CW + .6).toFixed(1)}" height="${RH + .5}" fill="${LEVELS[c]}"/>`;
      /* long runs carry faint per-column tone shifts */
      if (b - a > 5) for (let i = a; i < b; i++) { const h = (i * 7 + r * 13) % 11; if (h < 3) s += `<rect x="${(X0 + i * CW).toFixed(1)}" y="${(Y0 + r * RH).toFixed(1)}" width="${CW}" height="${RH}" fill="${h ? '#fff' : '#e9dc8a'}" opacity=".12"/>`; }
    }
  });
  BARS.forEach(([base, src], k) => {
    for (const [a, b, c] of runs(src)) if (b > a) s += `<rect x="${(X0 + a * CW).toFixed(1)}" y="${671 + k * 18.250}" width="${((b - a) * CW + .5).toFixed(1)}" height="15.500" fill="${HUES[c] || base}"/>`;
    if (k === 1) s += `<rect x="4843" y="${671 + k * 18.250}" width="26" height="15.500" fill="${base}"/>`;
  });
  /* column dendrogram */
  let d = '';
  const L = (x, y) => [3600 + x * .829, 560 + y * .829], Q = (x, y) => [4850 + x * .9247, 560 + y * .861];
  const br = (f, a, b, y, ya, yb) => { const p = f(a, ya), q = f(a, y), r = f(b, y), t = f(b, yb); d += `M${p}L${q}L${r}L${t}`; };
  br(L,452,1521,38,75,58); br(L,272,631,75,105,91); br(L,213,331,105,118,115); br(L,538,726,91,114,110);
  br(L,182,240,118,124,122); br(L,288,373,115,122,119); br(L,491,584,114,123,121); br(L,670,781,110,120,114);
  br(L,918,1278,90,110,93); br(L,1148,1408,93,112,102); br(L,1311,1505,102,108,104); br(L,875,962,111,123,116); br(L,1103,1190,112,119,116);
  br(L,1276,1346,108,117,115); br(L,1473,1537,104,122,116);
  const s1 = L(1098, 90), s2 = L(1098, 58), e2 = Q(392, 55.800), e3 = Q(392, 59); d += `M${s1}L${s2}L${e2}L${e3}`;
  br(Q,174,609,59,100,74); br(Q,103,246,100,113,104); br(Q,456,761,74,101,94); br(Q,400,512,101,114,107); br(Q,665,858,94,107,94); br(Q,858,911,94,94,101);
  br(Q,185,306,104,117,112); br(Q,632,697,107,119,117); br(Q,776,836,102,117,112); br(Q,876,945,101,119,108); br(Q,806,806.100,94,102,102);
  let seed = 11; const rnd = () => (seed = (seed * 16807) % 2147483647) / 2147483647;
  const leafY = 669.500;
  const sub = (a, b, y) => {
    if (b - a < 1) return;
    const m = a + Math.floor((b - a) * (.25 + rnd() * .5)), cl = (a + m) / 2, cr = (m + 1 + b) / 2;
    const nl = y + (leafY - y) * (.35 + rnd() * .45), nr = y + (leafY - y) * (.35 + rnd() * .45);
    const px = c => X0 + (c + .5) * CW;
    d += `M${px(cl)} ${m > a ? nl : leafY}V${y}H${px(cr)}V${b > m + 1 ? nr : leafY}`;
    if (m > a) sub(a, m, nl); if (b > m + 1) sub(m + 1, b, nr);
  };
  [[0,4,661],[5,9,661],[10,17,661],[18,26,659],[27,34,662],[35,42,661],[43,50,660],[51,61,656],[62,66,662],[67,78,658],[80,88,659],[89,97,657],[98,103,658],[104,114,656],[115,119,661],[120,125,658],[127,134,657],[135,144,657],[145,151,657],[153,157,656],[158,164,661],[165,172,657],[173,180,657],[181,186,658],[187,193,660],[194,198,660],[199,205,658],[207,211,661],[212,218,656]].forEach(g => sub(...g));
  /* row dendrogram: spine x, two ends with their child x */
  const rc = i => Y0 + RH * (i + .5), E = X0;
  const rb = (x, y1, c1, y2, c2) => { d += `M${c1} ${y1}H${x}V${y2}H${c2}`; };
  rb(3706, rc(0), E, rc(1), E); rb(3713.500, rc(2), E, rc(3), E); rb(3703, rc(4), E, rc(5), E);
  rb(3697, 1158, 3713.500, 1423, 3703); rb(3690.500, 895, 3706, 1290, 3697);
  rb(3652, 1093, 3690.500, 2048, 3672.500);
  rb(3710, rc(7), E, rc(8), E); rb(3700.500, rc(6), E, 1818, 3710); rb(3672.500, 1719, 3700.500, 2376, 3675.500);
  rb(3712, rc(10), E, rc(11), E); rb(3698, rc(9), E, 2215, 3712); rb(3675.500, 2116, 3698, 2636, 3681.500);
  rb(3707.500, rc(12), E, rc(13), E); rb(3681.500, 2479, 3707.500, 2792, 3687.500);
  rb(3687.500, rc(14), E, 2907, 3701); rb(3701, rc(15), E, 3007, 3703); rb(3703, rc(16), E, rc(17), E);
  s += `<path d="${d}" fill="none" stroke="#000" stroke-width="1.400"/>`;
  /* labels */
  const T = (x, y, t, fs, b) => { s += `<text x="${x}" y="${y + fs * .36}" font-size="${fs}"${b ? ' font-weight="700"' : ''}>${t}</text>`; };
  NAMES.forEach((n, i) => T(5766, rc(i) - 1, n, 13.500));
  ['sex','b_hai_v0_gmt','h3_hai_v0_gmt','h1_hai_v0_gmt','max_mnp_cd8_responder'].forEach((n, i) => T(5766, 679.500 + i * 18, n, 15.500, 1));
  for (let i = 0; i < N; i++) { const id = IDS[i % IDS.length]; s += `<text transform="translate(${(X0 + (i + .5) * CW - 4.800).toFixed(1)} 3143) rotate(90)" font-size="13.600">${id}</text>`; }
  s += '<defs><linearGradient id="g" x1="0" y1="0" x2="0" y2="1"><stop offset="0" stop-color="#d73027"/><stop offset=".18" stop-color="#fc8d59"/><stop offset=".35" stop-color="#fee090"/><stop offset=".5" stop-color="#ffffbf"/><stop offset=".66" stop-color="#e0f3f8"/><stop offset=".82" stop-color="#91bfdb"/><stop offset="1" stop-color="#4575b4"/></linearGradient></defs><rect x="5958" y="670" width="15" height="225" fill="url(#g)"/>';
  [3,2,1,0,-1,-2,-3].forEach((v, i) => T(5979, 692.600 + i * 30, v, 16));
  const legend = (ty, title, items) => {
    T(6004, 560 + ty * .861, title, 15.500, 1);
    items.forEach(([c, t], i) => { const y = 560 + (ty + 28 + i * 27.850) * .861; s += `<rect x="6004" y="${y - 12}" width="24" height="24.200" fill="${c}"/>`; T(6033, y, t, 16); });
  };
  legend(135, 'sex', [['#efedf5','M'],['#bcbddc','F'],['#756bb1','NA']]);
  legend(260, 'b_hai_v0_gmt', [['#66c2a5','g_41'],['#bba27b','g_6'],['#ee8c6c','g_81'],['#a597b0','g_161'],['#a99ac8','g_641'],['#d98fc4','g_227.27417'],['#c7b28b','g_321'],['#aad847','g_453.54834'],['#e4d833','g_453.55'],['#f4d24d','g_57.56854249'],['#e8c880','g_227.27'],['#cfbc9c','g_906.09668'],['#b3b3b3','g_8.0710678']]);
  legend(664, 'h3_hai_v0_gmt', [['#66c2a5','g_161'],['#b5a67f','g_41'],['#f58d68','g_321'],['#b7989f','g_6'],['#9a9ecb','g_453.54834'],['#cc90c8','g_114.137085'],['#d69cac','g_81'],['#b0c96a','g_227.27417'],['#c1d843','g_57.56854249'],['#f0d834','g_11'],['#f4d050','g_641'],['#e6c588','g_29.28427125'],['#cfbc9c','g_906.0966799'],['#b3b3b3','g_114.13708']]);
  legend(1095, 'h1_hai_v0_gmt', [['#66c2a5','g_161'],['#d09a74','g_6'],['#cf9488','g_81'],['#9a9ecb','g_114.137085'],['#d98fc4','g_321'],['#c7b28b','g_21'],['#b8da4c','g_227.27417'],['#f0d834','g_41'],['#f0ce6c','g_641'],['#d3bd9a','g_453.54834'],['#b3b3b3','g_1281']]);
  legend(1443, 'max_mnp_cd8_responder', [['#deebf7','g_0'],['#9ecae1','g_1'],['#3182bd','NA']]);
  return `<svg width="1487.200" height="1407.300" viewBox="3600 560 2790 2640">${s}</svg>`;
});

/* ---------- annotations and scrollbar ---------- */
define('callout-box', ':host{display:block;position:absolute;box-sizing:border-box;border:8px solid #ed2024;z-index:5}', '');
define('callout-number', ':host{display:flex;position:absolute;box-sizing:border-box;width:155px;height:155px;border:8px solid #ed2024;border-radius:50%;align-items:center;justify-content:center;font:700 75px/76px "Open Sans","Noto Sans",sans-serif;color:#ed2024;z-index:5;padding:2px 3px 0 0}', '<slot></slot>');
define('scroll-bar', `
:host{display:flex;box-sizing:border-box;flex-direction:column;align-items:center;width:32px;height:2116px;background:#fbfbfb;padding:10px 1px 9px 0}
i{width:19px;height:1724px;border-radius:10px;background:#8b8b8b;margin-top:14px}
.d{margin-top:auto;transform:rotate(180deg)}`, '<ui-icon name="tri" w="19" h="15"></ui-icon><i></i><ui-icon class="d" name="tri" w="19" h="15"></ui-icon>');

define('app-shell', `
:host{display:flex;position:relative;width:4096px;height:2308px;overflow:hidden;background:#fff}
main{flex:1;display:flex;flex-direction:column;min-width:0}
.tabs{display:flex;gap:9px;padding:6px 0 0 18px}
.low{display:flex;justify-content:space-between;margin-top:13px}
.views{display:flex;gap:76px;padding:38px 0 0 57px;height:107px;align-items:flex-start}
.row{display:flex}
cluster-heatmap{margin-left:748px}`, `
<side-bar></side-bar>
<main>
<top-bar></top-bar>
<div class="tabs"><page-tab>Dashboard</page-tab><page-tab active>Start</page-tab><page-tab>Workspace</page-tab></div>
<div class="low"><div>
<div class="views"><view-tab>Data overview</view-tab><view-tab>Correlation</view-tab><view-tab active>Hierarchical clustering</view-tab><view-tab>PCA analysis</view-tab><view-tab>t-SNE analysis</view-tab><view-tab>UMAP analysis</view-tab></div>
<div class="row"><settings-form></settings-form><cluster-heatmap></cluster-heatmap></div>
</div><scroll-bar></scroll-bar></div>
</main>
<callout-box style="left:474px;top:316px;width:697px;height:1992px"></callout-box>
<callout-number style="left:1199px;top:317px">1</callout-number>
<callout-box style="left:1833px;top:287px;width:1571px;height:1493px"></callout-box>
<callout-number style="left:3437px;top:287px">2</callout-number>`);
</script>
</body>
</html>
